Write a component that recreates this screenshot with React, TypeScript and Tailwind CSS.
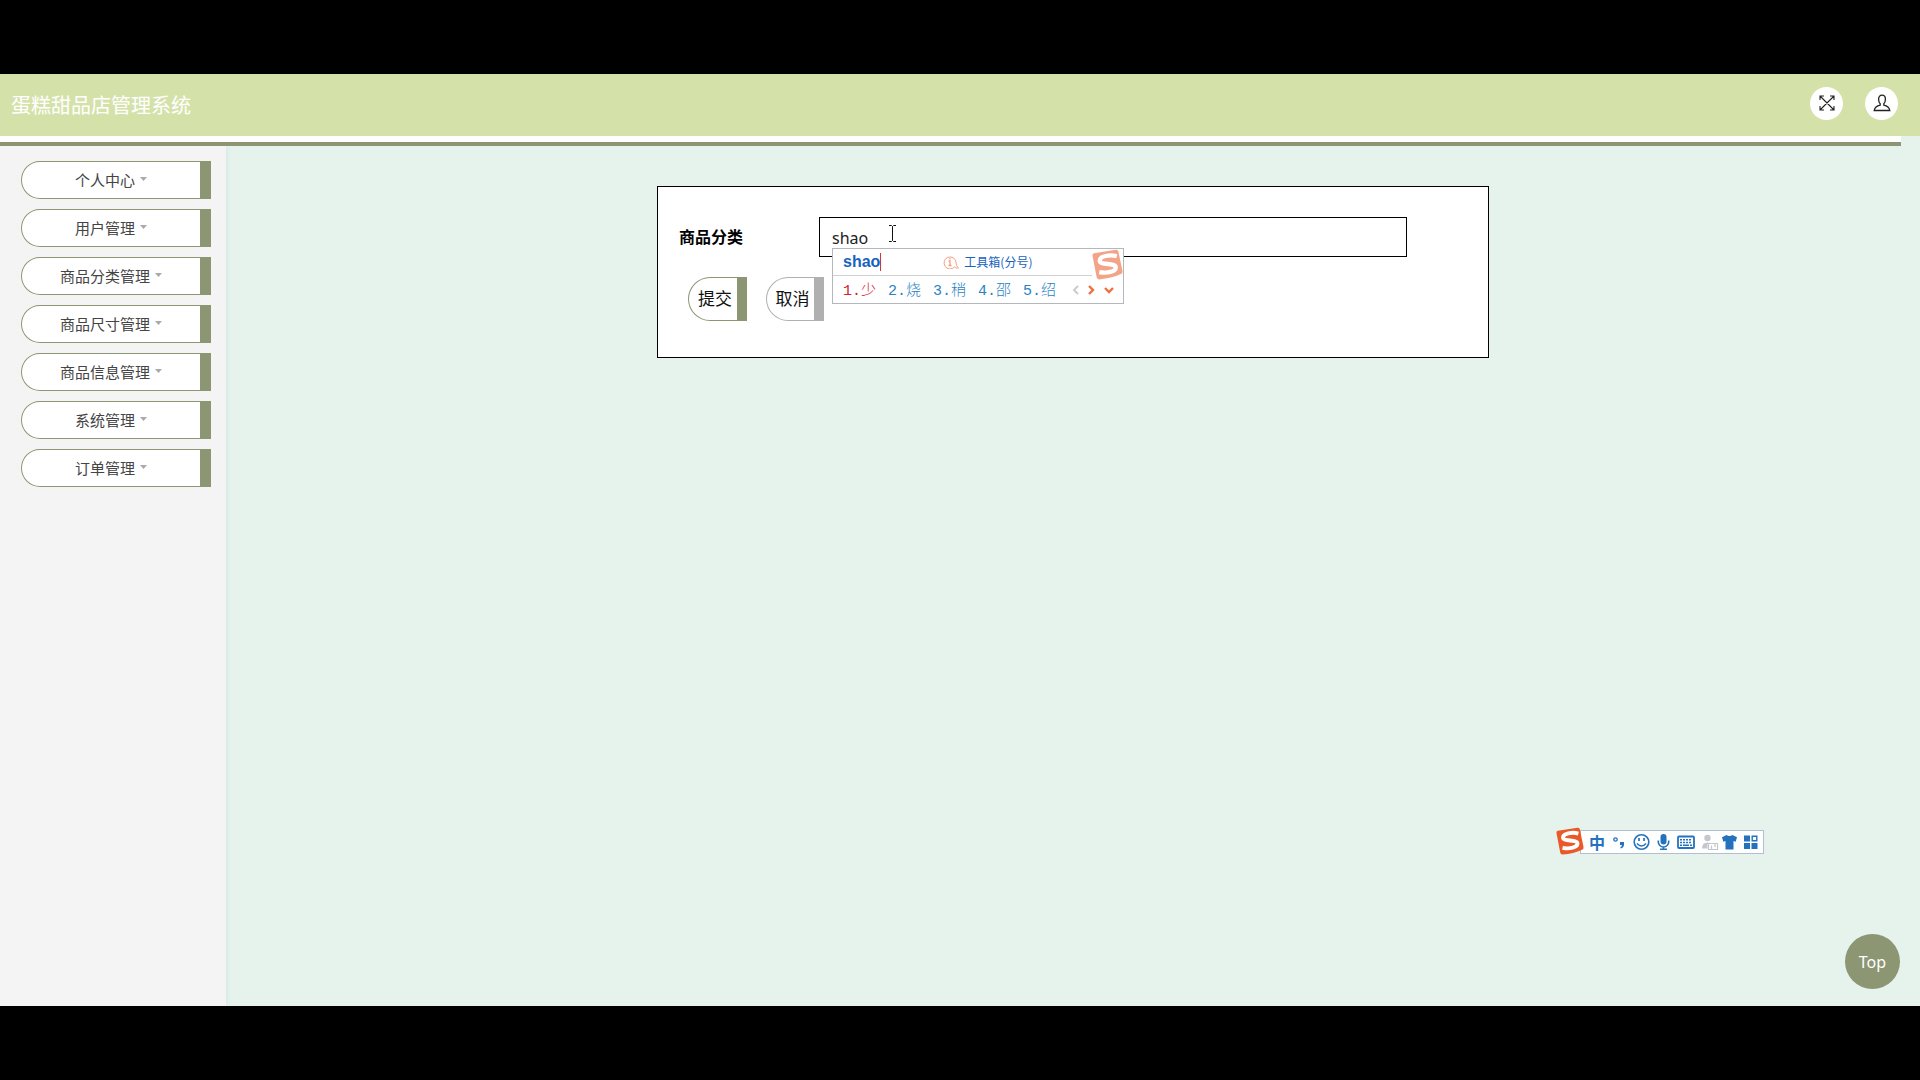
import { useState } from 'react'

const MENU = ['个人中心', '用户管理', '商品分类管理', '商品尺寸管理', '商品信息管理', '系统管理', '订单管理']

const CANDIDATES = ['少', '烧', '稍', '邵', '绍']

export default function App() {
  return (
    <div className="flex min-h-screen flex-col bg-black py-[74px] font-['Noto_Sans','Noto_Sans_CJK_SC',sans-serif]">
      <div className="relative flex flex-1 flex-col overflow-hidden bg-[#e6f3ed]">
        <Header />
        <div className="z-10 mr-[19px] h-[10px] border-b-4 border-[#8c9673] bg-white" />
        <div className="flex flex-1">
          <Sidebar />
          <main className="flex-1 px-4 pt-10">
            <CategoryForm />
          </main>
        </div>
        <ImeToolbar />
        <button
          type="button"
          className="absolute right-5 bottom-[17px] size-[55px] rounded-full bg-[#8c9673] text-base text-white"
        >
          Top
        </button>
      </div>
    </div>
  )
}

function Header() {
  return (
    <header className="flex h-[62px] items-center justify-between bg-[#d4e2aa] pr-[22px] pl-[11px]">
      <h1 className="pt-[2px] text-xl text-white">蛋糕甜品店管理系统</h1>
      <div className="flex gap-[22px] pb-1">
        <button
          type="button"
          aria-label="全屏"
          className="flex size-[33px] items-center justify-center rounded-full bg-white text-[#222]"
        >
          <svg width="16" height="16" viewBox="0 0 16 16" fill="none" stroke="currentColor" strokeWidth="1.1">
            <path d="M1 5V1h4M11 1h4v4M15 11v4h-4M5 15H1v-4M1 1l14 14M15 1L1 15" />
          </svg>
        </button>
        <button
          type="button"
          aria-label="个人中心"
          className="flex size-[33px] items-center justify-center rounded-full bg-white text-[#222]"
        >
          <svg width="18" height="18" viewBox="0 0 18 18" fill="none" stroke="currentColor" strokeWidth="1.3">
            <path d="M7.2 11.200V9.800C6 8.600 5.600 7 5.600 5.200 5.600 2.800 6.800 1.200 9 1.200s3.400 1.600 3.400 4c0 1.800-.4 3.400-1.600 4.600v1.400c2.800.6 5.400 2 6 5.300H1.200c.6-3.300 3.200-4.700 6-5.300z" />
          </svg>
        </button>
      </div>
    </header>
  )
}

function Sidebar() {
  return (
    <nav className="w-[226px] shrink-0 bg-[#f4f4f4] pt-[15px] pr-[15px] pl-[21px] shadow-[1px_0_4px_#cfe6e6]">
      <ul className="flex flex-col gap-[10px]">
        {MENU.map((name) => (
          <li key={name}>
            <button
              type="button"
              className="flex h-[38px] w-full items-center justify-center gap-[5px] rounded-l-[19px] border border-r-[11px] border-[#8c9673] bg-white text-[15px] text-[#444]"
            >
              {name}
              <svg width="7" height="4" viewBox="0 0 7 4" fill="#aaa" className="mb-[2px]">
                <path d="M0 0h7L3.500 4z" />
              </svg>
            </button>
          </li>
        ))}
      </ul>
    </nav>
  )
}

function CategoryForm() {
  const [value, setValue] = useState('shao')

  return (
    <form className="mx-auto w-full max-w-[832px] border border-black bg-white pt-[30px] pr-[81px] pb-9 pl-[21px]">
      <div className="flex items-center">
        <label htmlFor="category" className="w-[140px] shrink-0 text-base font-bold text-black">
          商品分类
        </label>
        <div className="relative flex-1">
          <input
            id="category"
            type="text"
            value={value}
            onChange={(e) => setValue(e.target.value)}
            className="block h-10 w-full border border-black bg-white px-3 pt-[2px] text-base text-[#222] outline-none"
          />
          <svg
            width="9"
            height="17"
            viewBox="0 0 9 17"
            fill="none"
            stroke="#111"
            className="absolute top-2 left-[69px]"
          >
            <path d="M1 .5h2.500l1 1 1-1H8M1 16.500h2.500l1-1 1 1H8M4.500 1.500v14" />
          </svg>
          <ImePopup />
        </div>
      </div>
      <div className="mt-5 flex gap-[19px] pl-[9px]">
        <button
          type="button"
          className="h-11 w-[59px] rounded-l-[22px] border border-r-[10px] border-[#8c9673] bg-white pl-1 text-[17px] whitespace-nowrap text-[#111]"
        >
          提交
        </button>
        <button
          type="button"
          className="h-11 w-[58px] rounded-l-[22px] border border-r-[10px] border-[#b0b0b0] bg-white pl-1 text-[17px] whitespace-nowrap text-[#111]"
        >
          取消
        </button>
      </div>
    </form>
  )
}

/** Input method candidate window, floats under the text being typed. */
function ImePopup() {
  return (
    <div className="absolute top-[31px] left-[13px] z-10 h-[56px] w-[292px] border border-[#b4b8bc] bg-white">
      <div className="mr-[31px] flex h-[27px] items-center border-b border-[#d0d0d0] pl-[10px]">
        <span className="border-r border-[#e0303a] font-['Liberation_Sans',sans-serif] text-base leading-[18px] font-bold text-[#1763bd]">
          shao
        </span>
        <svg width="16" height="14" viewBox="0 0 16 14" fill="none" stroke="#f2a083" className="ml-[62px]">
          <path d="M11.500 12A6 6 0 1 1 13 7c0 2.600 .6 4.600 2.500 6-1.600.3-3-.1-4-1z" />
          <path d="M7 3v1.500M5.500 6H7v4M5.500 10.500h3" strokeWidth="1.300" />
        </svg>
        <span className="ml-[5px] font-['Noto_Sans_CJK_SC',sans-serif] text-xs text-[#1763bd]">
          工具箱(分号)
        </span>
      </div>
      <div className="flex h-[27px] items-center pt-1 pl-[10px] font-['Liberation_Mono','Noto_Sans_CJK_SC',monospace] text-[15px] leading-5 text-[#2a82c4]">
        {CANDIDATES.map((c, i) => (
          <span key={c} className={i === 0 ? 'w-[45px] text-[#d8202c]' : 'w-[45px]'}>
            {i + 1}.<span className="font-light">{c}</span>
          </span>
        ))}
        <svg width="42" height="10" viewBox="0 0 42 10" fill="none" strokeWidth="2" className="mb-[3px] ml-[4px]">
          <path d="M6 1L2 5l4 4" stroke="#ccc" />
          <path d="M17 1l4 4-4 4" stroke="#ee7040" strokeWidth="2.400" />
          <path d="M33 3l4 4 4-4" stroke="#ee7040" strokeWidth="2.400" />
        </svg>
      </div>
      <SogouLogo className="absolute top-0 right-0 size-[31px] opacity-55" />
    </div>
  )
}

function SogouLogo({ className }: { className: string }) {
  return (
    <svg viewBox="0 0 30 30" className={className}>
      <path d="M.500 6.500Q0 4.500 2 4L23 .8q2-.3 2.500 1.500l4 19q.4 2-1.500 3Q19 28.500 7 29.400q-2 .1-2.500-2z" fill="#ea5a28" />
      <path
        d="M24 7C17 5 7.500 7 7.500 11.300c0 4.700 15.500 1.700 15.500 6.500 0 4.200-8.500 6-16 4.600"
        fill="none"
        stroke="#fff"
        strokeWidth="4.200"
      />
    </svg>
  )
}

function ImeToolbar() {
  return (
    <div className="absolute right-[156px] bottom-[152px] flex h-6 w-[184px] items-center border border-[#b3bfd0] bg-white text-[#2472be]">
      <SogouLogo className="absolute -top-1 -left-[25px] size-7" />
      <span className="ml-2 w-4 shrink-0 font-['Noto_Sans_CJK_SC',sans-serif] text-base leading-[22px] font-bold">
        中
      </span>
      <svg width="158" height="22" viewBox="24 0 158 22" fill="none" stroke="currentColor" strokeWidth="2">
        {/* punctuation mode */}
        <circle cx="34.500" cy="8.500" r="1.700" strokeWidth="1.300" />
        <path d="M39 11h4v2.500q0 3-3.500 4v-1.500q1.500-.5 1.500-2h-2z" fill="currentColor" stroke="none" />
        {/* emoji */}
        <circle cx="60.500" cy="11" r="7.300" strokeWidth="1.600" />
        <path d="M58 7v3M63 7v3" strokeWidth="1.700" />
        <path d="M56 12.500q4.500 5 9 0" strokeWidth="1.500" />
        {/* voice */}
        <rect x="79.500" y="3" width="6" height="10.500" rx="3" fill="currentColor" stroke="none" />
        <path d="M77.300 9.500v1.500a5.200 5 0 0 0 10.400 0V9.500M82.500 16v3M79 18.300h7" strokeWidth="1.600" />
        {/* keyboard */}
        <rect x="97" y="5.500" width="16" height="11.500" rx="1" strokeWidth="1.800" />
        <path d="M99 8.800h12M99 11.500h12" strokeDasharray="2 1" strokeWidth="1.600" />
        <path d="M99 14.300h2M102 14.300h6M109 14.300h2" strokeWidth="1.600" />
        {/* account */}
        <g fill="#c2c8ce" stroke="none">
          <circle cx="126.500" cy="7" r="3.200" />
          <path d="M121 17.500q0-6 5.500-6 3 0 4 1.500h-4v4.500z" />
          <path d="M127.500 12.500h9v6h-9z" fill="#fff" stroke="#c2c8ce" strokeWidth="1.200" />
          <path d="M130.500 14.500v4M134 13v3" stroke="#c2c8ce" strokeWidth="1.200" />
        </g>
        {/* skin */}
        <path d="M145.500 4q3 2 6 0l4.500 2.300-1.300 4.500-2.200-.7v8.400h-8v-8.400l-2.200.7L141 6.300z" fill="currentColor" stroke="none" />
        {/* toolbox */}
        <path d="M163 4.500h6v6h-6zM163 12h6v6h-6zM170.500 12h6v6h-6z" fill="currentColor" stroke="none" />
        <path d="M171.200 5.200h4.600v4.600h-4.600z" strokeWidth="1.400" />
      </svg>
    </div>
  )
}
